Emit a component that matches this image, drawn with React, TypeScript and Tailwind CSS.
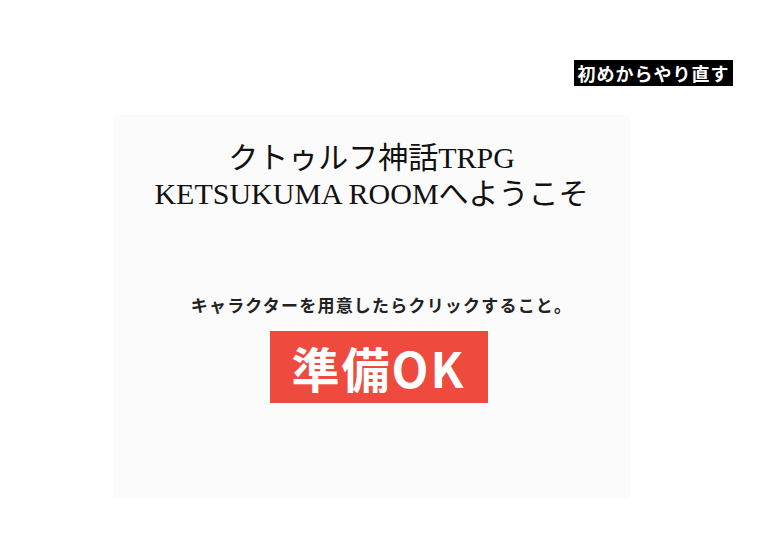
import React from "react";

const App: React.FC = () => {
  function handleReset() {
    window.location.reload();
  }

  return (
    <div className="w-[777px] h-[533px] bg-white overflow-hidden pt-[60px]">
      <div className="flex justify-end pr-[44px]">
        <button
          onClick={handleReset}
          className="h-[26px] w-[159px] bg-black text-white font-bold text-[18px] leading-[26px] tracking-[1px] flex items-center justify-center font-['Noto_Sans_CJK_JP','Noto_Sans',sans-serif]"
        >
          初めからやり直す
        </button>
      </div>

      <div className="ml-[113px] mt-[29px] w-[517px] h-[383px] bg-[#fbfbfb] flex flex-col items-center pt-[25px]">
        <h1 className="text-[30px] leading-[36px] text-[#111] text-center font-normal font-['Liberation_Serif','Noto_Sans_CJK_JP',serif]">
          クトゥルフ神話TRPG
          <br />
          KETSUKUMA ROOMへようこそ
        </h1>

        <p className="mt-[85px] pl-[20px] text-[17px] leading-[20px] font-bold text-[#222] tracking-[1.2px] font-['Liberation_Serif','Noto_Sans_CJK_JP',serif]">
          キャラクターを用意したらクリックすること。
        </p>

        <button className="mt-[14px] ml-[14px] w-[218px] h-[72px] bg-[#ee4a3e] text-white font-bold text-[48px] leading-[72px] tracking-[2px] flex items-center justify-center font-['Noto_Sans_CJK_JP','Noto_Sans',sans-serif]">
          準備OK
        </button>
      </div>
    </div>
  );
};

export default App;
